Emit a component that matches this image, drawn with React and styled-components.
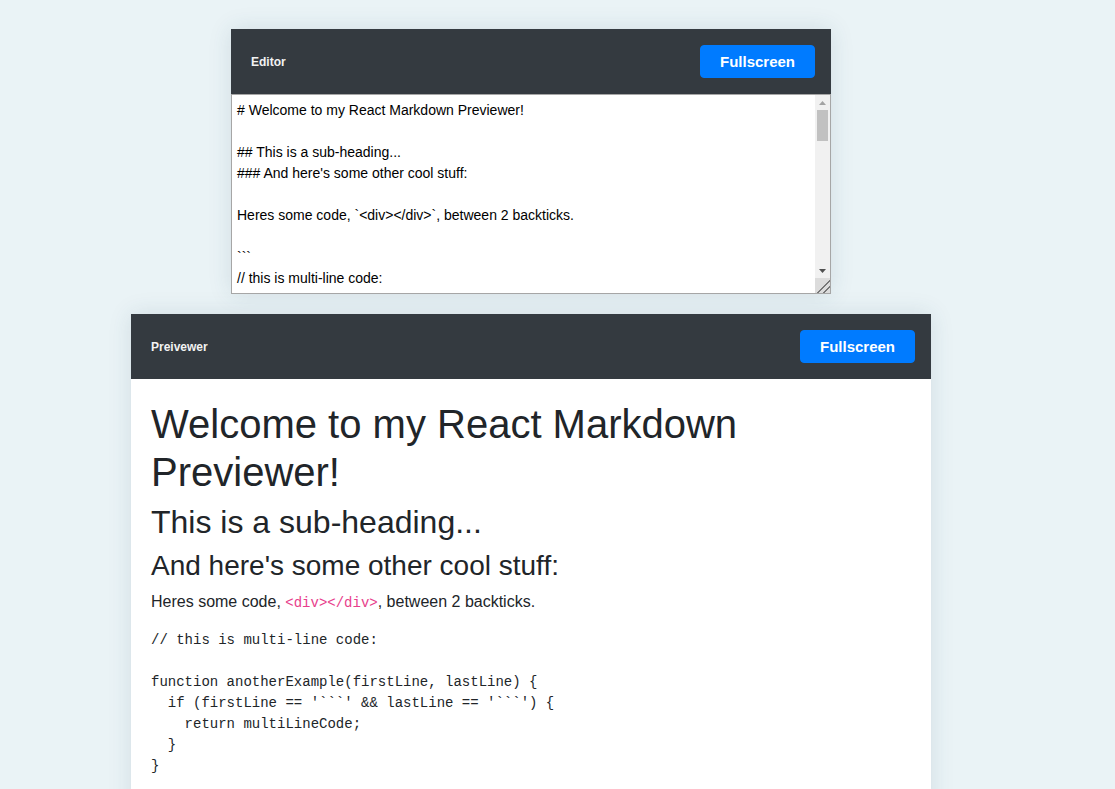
import React, { useState } from "react";
import styled, { createGlobalStyle } from "styled-components";

const GlobalStyle = createGlobalStyle`
  html, body {
    margin: 0;
    padding: 0;
    background: #eaf3f6;
    font-family: "Liberation Sans", Arial, sans-serif;
    color: #212529;
  }
  * { box-sizing: border-box; }
`;

const Page = styled.div`
  height: 100vh;
  overflow: hidden;
  display: flex;
  flex-direction: column;
  align-items: center;
  padding: 29px 53px 0 0;
  gap: 20px;
`;

const Card = styled.section`
  width: ${(p) => p.$width}px;
  flex-shrink: 0;
  background: #fff;
  box-shadow: 0 0 22px rgba(40, 80, 100, 0.13);
`;

const Toolbar = styled.header`
  display: flex;
  align-items: center;
  justify-content: space-between;
  height: 65px;
  padding: 0 16px 0 20px;
  background: #343a40;
`;

const Title = styled.span`
  color: #f2f2f2;
  font-size: 12px;
  font-weight: 700;
`;

const FullButton = styled.button`
  height: 33px;
  padding: 0 19px;
  border: 1px solid #007bff;
  border-radius: 4px;
  background: #007bff;
  color: #fff;
  font-family: "Liberation Sans", Arial, sans-serif;
  font-size: 15px;
  font-weight: 700;
  cursor: pointer;
`;

const EditorWrap = styled.div`
  position: relative;
`;

const Editor = styled.textarea`
  display: block;
  width: 100%;
  height: 200px;
  margin: 0;
  padding: 5px 20px 4px 5px;
  border: 1px solid #a6a6a6;
  resize: vertical;
  outline: none;
  font-family: "Liberation Sans", Arial, sans-serif;
  font-size: 14px;
  line-height: 21px;
  color: #000;
  background: #fff;

  &::-webkit-resizer {
    background-color: #dcdcdc;
    background-image: linear-gradient(135deg, transparent 0 55%, #777 55% 62%, transparent 62% 75%, #777 75% 82%, transparent 82%);
  }
`;

const ScrollTrack = styled.div`
  position: absolute;
  top: 1px;
  right: 1px;
  bottom: 16px;
  width: 15px;
  display: flex;
  flex-direction: column;
  align-items: center;
  background: #f1f1f1;
  pointer-events: none;
`;

const ArrowBox = styled.div`
  height: 15px;
  width: 15px;
  display: flex;
  align-items: center;
  justify-content: center;
  flex-shrink: 0;
`;

const Thumb = styled.div`
  width: 11px;
  height: 31px;
  margin-bottom: auto;
  background: #c1c1c1;
`;

const Arrow = ({ down, color }) => (
  <svg width="7" height="4" viewBox="0 0 7 4">
    {down ? <polygon points="0,0 7,0 3.5,4" fill={color} /> : <polygon points="0,4 7,4 3.5,0" fill={color} />}
  </svg>
);

const Preview = styled.div`
  padding: 21px 20px 20px;
  font-size: 16px;
  line-height: 1.5;
`;

const H1 = styled.h1`
  margin: 0 0 7px;
  font-size: 40px;
  font-weight: 400;
  line-height: 1.2;
`;

const H2 = styled.h2`
  margin: 0 0 8px;
  font-size: 32px;
  font-weight: 400;
  line-height: 1.2;
`;

const H3 = styled.h3`
  margin: 0 0 7px;
  font-size: 28px;
  font-weight: 400;
  line-height: 1.2;
`;

const Para = styled.p`
  margin: 0 0 16px;
`;

const InlineCode = styled.code`
  font-family: "Liberation Mono", "Courier New", monospace;
  font-size: 14px;
  color: #e83e8c;
`;

const CodeBlock = styled.pre`
  margin: 0 0 16px;
  font-family: "Liberation Mono", "Courier New", monospace;
  font-size: 14px;
  line-height: 21px;
  color: #212529;
`;

const initialMarkdown = `# Welcome to my React Markdown Previewer!

## This is a sub-heading...
### And here's some other cool stuff:

Heres some code, \`<div></div>\`, between 2 backticks.

\`\`\`
// this is multi-line code:

function anotherExample(firstLine, lastLine) {
  if (firstLine == '\`\`\`' && lastLine == '\`\`\`') {
    return multiLineCode;
  }
}
\`\`\`

You can also make text **bold**... whoa!
Or _italic_.
Or... wait for it... **_both!_**
And feel free to go crazy ~~crossing stuff out~~.

There's also [links](https://www.freecodecamp.org), and
> Block Quotes!

And if you want to get really crazy, even tables:

Wild Header | Crazy Header | Another Header?
------------ | ------------- | -------------
Your content can | be here, and it | can be here....
And here. | Okay. | I think we get it.

- And of course there are lists.
  - Some are bulleted.
     - With different indentation levels.
        - That look like this.


1. And there are numbered lists too.
1. Use just 1s if you want!
1. And last but not least, let's not forget embedded images:
`;

const codeText = `// this is multi-line code:

function anotherExample(firstLine, lastLine) {
  if (firstLine == '\`\`\`' && lastLine == '\`\`\`') {
    return multiLineCode;
  }
}`;

export default function App() {
  const [text, setText] = useState(initialMarkdown);
  return (
    <>
      <GlobalStyle />
      <Page>
        <Card $width={600}>
          <Toolbar>
            <Title>Editor</Title>
            <FullButton>Fullscreen</FullButton>
          </Toolbar>
          <EditorWrap>
            <Editor
              id="editor"
              value={text}
              onChange={(e) => setText(e.target.value)}
              spellCheck={false}
            />
            <ScrollTrack aria-hidden="true">
              <ArrowBox><Arrow color="#a3a3a3" /></ArrowBox>
              <Thumb />
              <ArrowBox><Arrow down color="#505050" /></ArrowBox>
            </ScrollTrack>
          </EditorWrap>
        </Card>
        <Card $width={800}>
          <Toolbar>
            <Title>Preivewer</Title>
            <FullButton>Fullscreen</FullButton>
          </Toolbar>
          <Preview id="preview">
            <H1>Welcome to my React Markdown Previewer!</H1>
            <H2>This is a sub-heading...</H2>
            <H3>And here's some other cool stuff:</H3>
            <Para>
              Heres some code, <InlineCode>&lt;div&gt;&lt;/div&gt;</InlineCode>, between 2 backticks.
            </Para>
            <CodeBlock>{codeText}</CodeBlock>
          </Preview>
        </Card>
      </Page>
    </>
  );
}
